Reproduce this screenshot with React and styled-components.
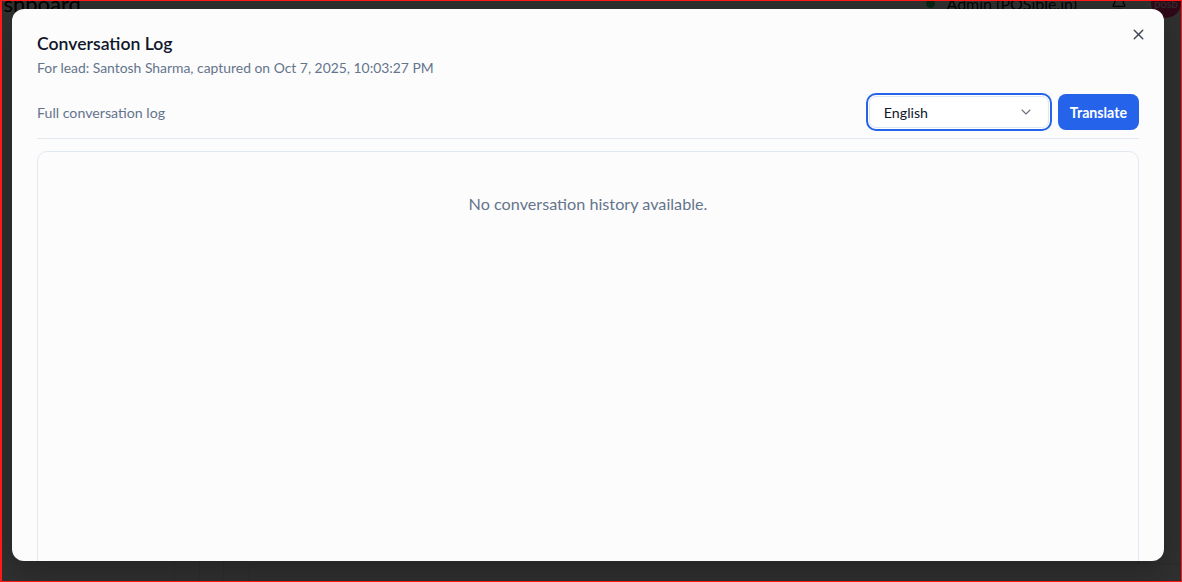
import React from "react";
import styled, { createGlobalStyle } from "styled-components";
import { X, ChevronDown, Bell } from "lucide-react";

const GlobalStyle = createGlobalStyle`
  * { box-sizing: border-box; }
  html, body { margin: 0; padding: 0; }
  body {
    font-family: Lato, "Open Sans", sans-serif;
    background: #303030;
  }
`;

const Frame = styled.div`
  position: relative;
  width: 1182px;
  height: 582px;
  overflow: hidden;
  border: 1px solid #ff1a1a;
  border-left-width: 2px;
  background: #ffffff;
  display: flex;
  flex-direction: column;
`;

/* page behind the dialog */
const TopBar = styled.header`
  display: flex;
  align-items: center;
  height: 30px;
  margin-top: -13px;
`;

const PageTitle = styled.h1`
  margin: 0 0 0 -26px;
  font-size: 22px;
  font-weight: 400;
  color: #000;
  flex: 1;
`;

const UserArea = styled.div`
  display: flex;
  align-items: center;
  gap: 10px;
  font-size: 16px;
  color: #111;
`;

const OnlineDot = styled.span`
  width: 9px;
  height: 9px;
  border-radius: 50%;
  background: #22c55e;
  margin-right: 2px;
`;

const Avatar = styled.span`
  width: 30px;
  height: 30px;
  border-radius: 50%;
  background: #ff2d7a;
  color: #fff;
  font-size: 11px;
  display: flex;
  align-items: center;
  justify-content: center;
  margin-left: 14px;
`;

const PageBody = styled.div`
  flex: 1;
`;

const TableStrip = styled.div`
  display: flex;
  height: 22px;
  padding-left: 172px;
`;

const Cell = styled.div`
  width: ${(p) => p.$w}px;
  border-left: 1px solid #e8e8e8;
`;

const RoundCell = styled.div`
  flex: 1;
  margin-top: 4px;
  border: 1px solid #e8e8e8;
  border-right: none;
  border-radius: 10px 0 0 0;
`;

/* dialog */
const Overlay = styled.div`
  position: absolute;
  inset: 0;
  background: rgba(0, 0, 0, 0.81);
  padding: 8px 16px 0 10px;
`;

const Dialog = styled.div`
  position: relative;
  width: 1152px;
  height: 552px;
  background: #fcfcfd;
  border-radius: 12px;
  box-shadow: 0 10px 30px rgba(0, 0, 0, 0.25);
  padding: 23px 25px 0;
  overflow: hidden;
  display: flex;
  flex-direction: column;
`;

const CloseButton = styled.button`
  position: absolute;
  top: 15px;
  right: 16px;
  width: 20px;
  height: 20px;
  padding: 0;
  border: none;
  background: none;
  color: #3f4654;
  display: flex;
  align-items: center;
  justify-content: center;
  cursor: pointer;
`;

const Title = styled.h2`
  margin: 0;
  font-size: 17.6px;
  line-height: 24px;
  font-weight: 600;
  color: #0f172a;
`;

const Subtitle = styled.p`
  margin: 2px 0 0;
  font-size: 13.9px;
  line-height: 20px;
  color: #64748b;
`;

const Toolbar = styled.div`
  display: flex;
  align-items: center;
  gap: 6px;
  margin-top: 15px;
  padding-bottom: 7px;
  border-bottom: 1px solid #e2e8f0;
`;

const ToolbarLabel = styled.span`
  flex: 1;
  font-size: 14.2px;
  color: #64748b;
`;

const Select = styled.div`
  width: 186px;
  height: 38px;
  border: 2px solid #2563eb;
  border-radius: 10px;
  box-shadow: inset 0 0 0 1px #ffffff, inset 0 0 0 2px #e2e8f0;
  background: #fff;
  display: flex;
  align-items: center;
  justify-content: space-between;
  padding: 0 16px;
  font-size: 14.2px;
  color: #0f172a;
  svg { color: #6b7280; }
`;

const Button = styled.button`
  height: 36px;
  padding: 0 12px;
  border: none;
  border-radius: 8px;
  background: #2563eb;
  color: #fff;
  font-family: inherit;
  font-size: 14.2px;
  font-weight: 700;
  cursor: pointer;
`;

const LogBox = styled.div`
  margin-top: 12px;
  flex: 1;
  margin-bottom: -20px;
  border: 1px solid #e2e8f0;
  border-radius: 10px;
  padding: 40px 16px;
  text-align: center;
`;

const Empty = styled.p`
  margin: 0;
  font-size: 16.2px;
  line-height: 24px;
  color: #64748b;
`;

export default function App() {
  return (
    <>
      <GlobalStyle />
      <Frame>
        <TopBar>
          <PageTitle>Dashboard</PageTitle>
          <UserArea>
            <OnlineDot />
            <span>Admin (POSible.in)</span>
            <Bell size={16} style={{ marginLeft: 24 }} />
            <Avatar>posb</Avatar>
          </UserArea>
        </TopBar>
        <PageBody />
        <TableStrip>
          <Cell $w={25} />
          <Cell $w={24} />
          <Cell $w={25} />
          <RoundCell />
        </TableStrip>
        <Overlay>
          <Dialog>
            <CloseButton aria-label="Close">
              <X size={17} strokeWidth={2} />
            </CloseButton>
            <Title>Conversation Log</Title>
            <Subtitle>For lead: Santosh Sharma, captured on Oct 7, 2025, 10:03:27 PM</Subtitle>
            <Toolbar>
              <ToolbarLabel>Full conversation log</ToolbarLabel>
              <Select>
                <span>English</span>
                <ChevronDown size={16} strokeWidth={1.6} />
              </Select>
              <Button>Translate</Button>
            </Toolbar>
            <LogBox>
              <Empty>No conversation history available.</Empty>
            </LogBox>
          </Dialog>
        </Overlay>
      </Frame>
    </>
  );
}
